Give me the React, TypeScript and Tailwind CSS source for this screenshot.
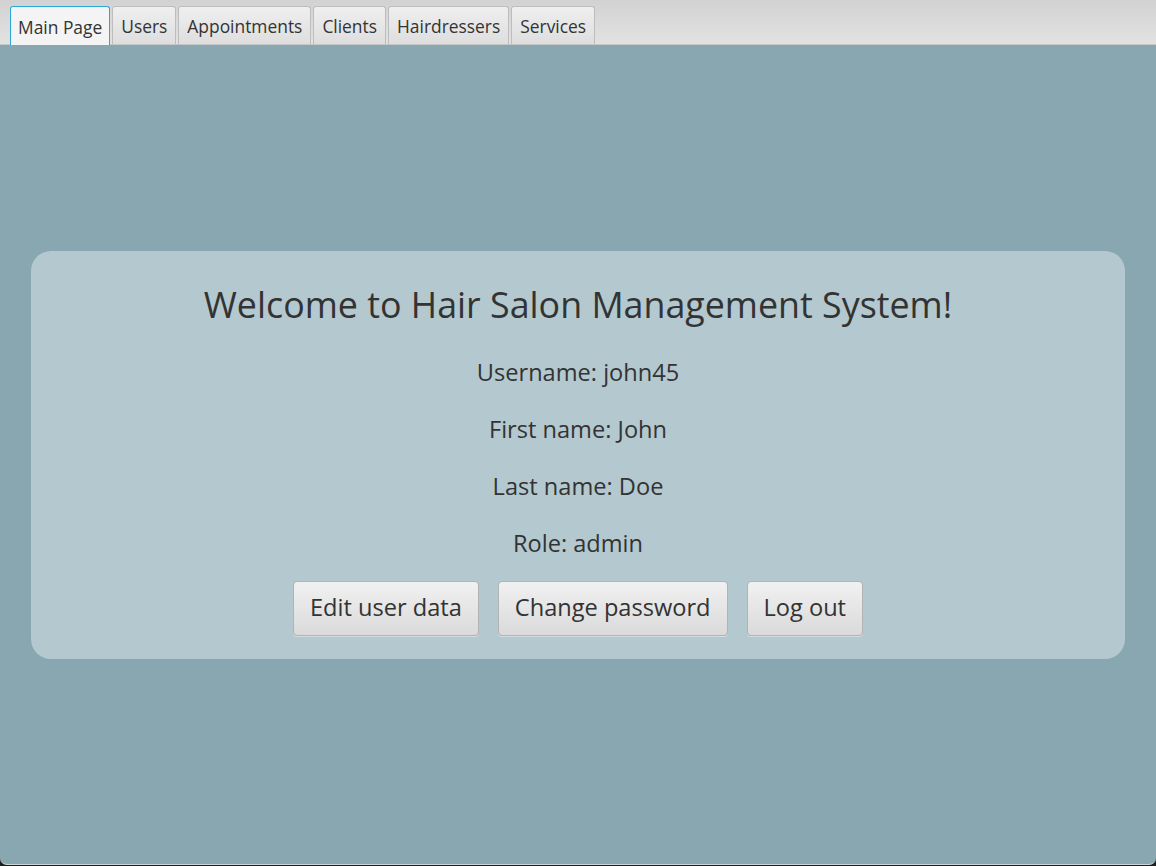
import React from "react";

const tabs = ["Main Page", "Users", "Appointments", "Clients", "Hairdressers", "Services"];

export default function App() {
  return (
    <div
      className="w-[1156px] h-[866px] bg-[#1f1f1f] overflow-hidden"
      style={{ fontFamily: '"Open Sans", "Noto Sans", sans-serif' }}
    >
      <div className="h-[865px] flex flex-col bg-[#89a7b0] rounded-b-[7px] overflow-hidden border-b border-[#c9d6da]">
        <div className="h-[45px] shrink-0 flex items-end gap-[2px] pl-[10px] bg-gradient-to-b from-[#d2d2d2] to-[#e2e2e2] border-b border-[#c6c6c6]">
          {tabs.map((t, i) =>
            i === 0 ? (
              <div
                key={t}
                className="h-[39px] -mb-px px-[7px] pt-[2px] flex items-center text-[17.4px] text-[#333] bg-[#f4f4f4] border border-[#2aa8d9] border-b-0 rounded-t-[3px]"
              >
                {t}
              </div>
            ) : (
              <div
                key={t}
                className="h-[38px] px-[8px] pt-[2px] flex items-center text-[17.4px] text-[#333] bg-gradient-to-b from-[#efefef] to-[#dedede] border border-[#bdbdbd] border-b-0 rounded-t-[3px]"
              >
                {t}
              </div>
            )
          )}
        </div>
        <div className="flex-1 flex items-center">
          <div className="mx-[31px] flex-1 h-[408px] rounded-[20px] bg-[#b4c8cf] flex flex-col items-center pt-[29px] text-[#333]">
            <div className="text-[35.8px] leading-[48px]">Welcome to Hair Salon Management System!</div>
            <div className="mt-[28px] flex flex-col items-center gap-[25px] text-[23.6px] leading-[32px]">
              <div>Username: john45</div>
              <div>First name: John</div>
              <div>Last name: Doe</div>
              <div>Role: admin</div>
            </div>
            <div className="mt-[22px] flex gap-[19px]">
              {["Edit user data", "Change password", "Log out"].map((b) => (
                <div
                  key={b}
                  className="h-[55px] px-[16px] flex items-center text-[23.6px] text-[#333] bg-gradient-to-b from-[#f1f1f1] to-[#dadada] border border-[#b3b3b3] rounded-[4px] shadow-[0_1px_0_rgba(255,255,255,0.4)]"
                >
                  {b}
                </div>
              ))}
            </div>
          </div>
        </div>
      </div>
    </div>
  );
}
